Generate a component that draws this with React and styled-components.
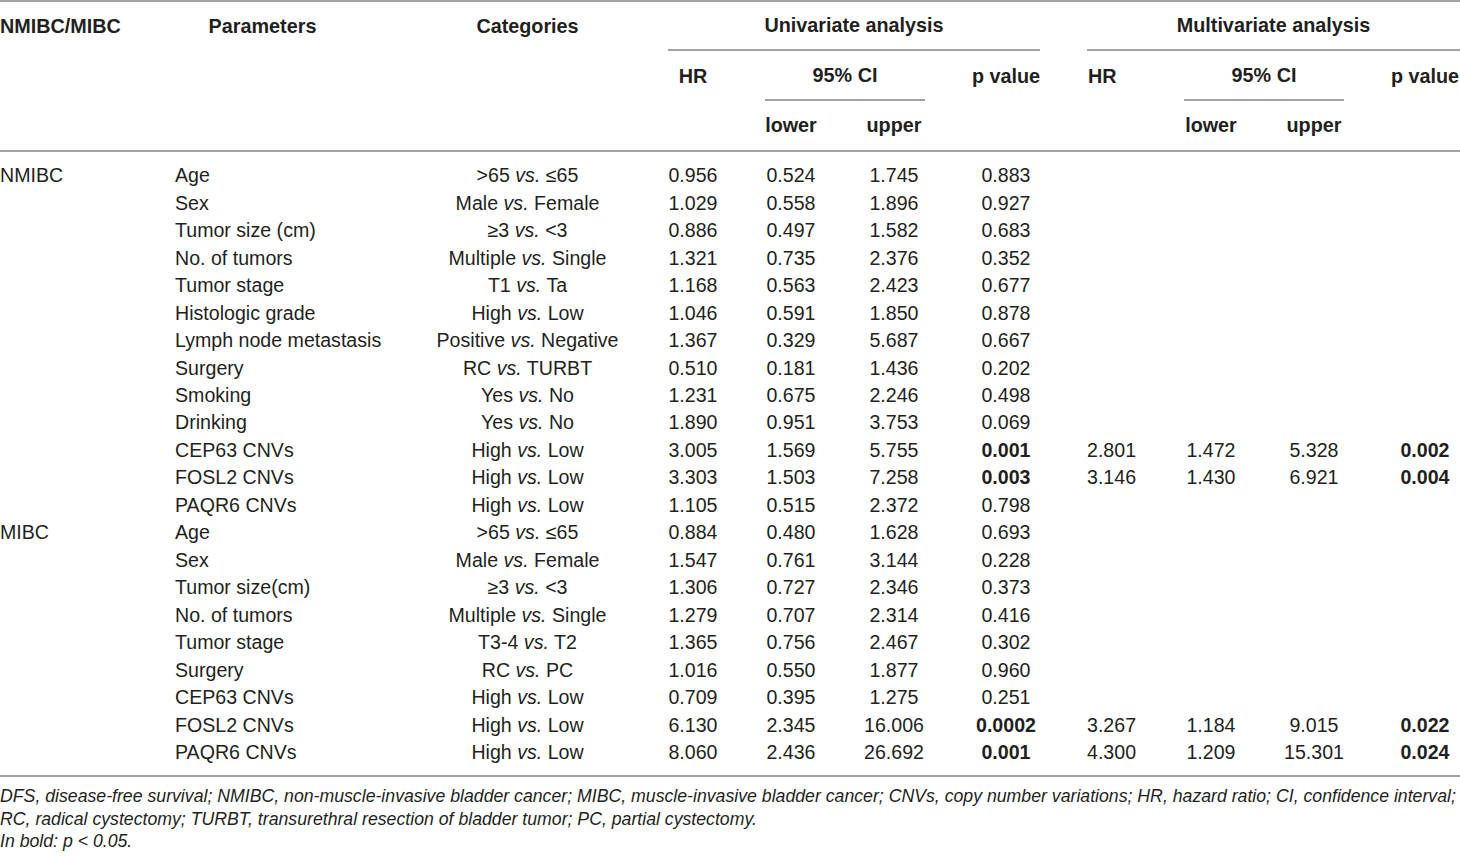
import React from "react";
import styled, { createGlobalStyle, css } from "styled-components";

const Global = createGlobalStyle`
  html, body { margin: 0; padding: 0; background: #ffffff; }
  body {
    font-family: "Liberation Sans", Arial, Helvetica, sans-serif;
    color: #231f20;
  }
`;

const COLS = "175px 255px 195px 136px 60px 146px 78px 115px 102px 104px 94px";
const RULE = "#a3a3a3";

const Page = styled.div`
  width: 1460px;
`;

const Head = styled.div`
  display: grid;
  grid-template-columns: ${COLS};
  grid-template-rows: 49px 50px 49px;
  border-top: 2px solid ${RULE};
  border-bottom: 2px solid ${RULE};
  font-size: 19.8px;
  font-weight: 700;
`;

const HCell = styled.div`
  display: flex;
  align-items: center;
  box-sizing: border-box;
  white-space: nowrap;
  grid-column: ${(p) => p.$col};
  grid-row: ${(p) => p.$row};
  justify-content: ${(p) => p.$align || "center"};
  padding-left: ${(p) => p.$pl || 0}px;
  padding-right: ${(p) => p.$pr || 0}px;
  ${(p) =>
    p.$rule &&
    css`
      border-bottom: 2px solid ${RULE};
      margin-left: ${p.$ml || 0}px;
      margin-right: ${p.$mr || 0}px;
    `}
`;

const Body = styled.div`
  padding: 10px 0 9px;
  border-bottom: 2px solid ${RULE};
  font-size: 19.6px;
`;

const Row = styled.div`
  display: grid;
  grid-template-columns: ${COLS};
  height: 27.48px;
  align-items: center;
  white-space: nowrap;
`;

const Cell = styled.div`
  text-align: ${(p) => p.$align || "center"};
  padding-left: ${(p) => p.$pl || 0}px;
  padding-right: ${(p) => p.$pr || 0}px;
  font-weight: ${(p) => (p.$bold ? 700 : 400)};
`;

const Vs = styled.i`
  font-style: italic;
`;

const Notes = styled.div`
  padding-top: 8px;
  font-size: 17.7px;
  font-style: italic;
  line-height: 22.5px;
  white-space: nowrap;
`;

const Note = styled.div``;

const nmibc = [
  ["Age", [">65", "≤65"], "0.956", "0.524", "1.745", "0.883"],
  ["Sex", ["Male", "Female"], "1.029", "0.558", "1.896", "0.927"],
  ["Tumor size (cm)", ["≥3", "<3"], "0.886", "0.497", "1.582", "0.683"],
  ["No. of tumors", ["Multiple", "Single"], "1.321", "0.735", "2.376", "0.352"],
  ["Tumor stage", ["T1", "Ta"], "1.168", "0.563", "2.423", "0.677"],
  ["Histologic grade", ["High", "Low"], "1.046", "0.591", "1.850", "0.878"],
  ["Lymph node metastasis", ["Positive", "Negative"], "1.367", "0.329", "5.687", "0.667"],
  ["Surgery", ["RC", "TURBT"], "0.510", "0.181", "1.436", "0.202"],
  ["Smoking", ["Yes", "No"], "1.231", "0.675", "2.246", "0.498"],
  ["Drinking", ["Yes", "No"], "1.890", "0.951", "3.753", "0.069"],
  ["CEP63 CNVs", ["High", "Low"], "3.005", "1.569", "5.755", "0.001", ["2.801", "1.472", "5.328", "0.002"]],
  ["FOSL2 CNVs", ["High", "Low"], "3.303", "1.503", "7.258", "0.003", ["3.146", "1.430", "6.921", "0.004"]],
  ["PAQR6 CNVs", ["High", "Low"], "1.105", "0.515", "2.372", "0.798"],
];

const mibc = [
  ["Age", [">65", "≤65"], "0.884", "0.480", "1.628", "0.693"],
  ["Sex", ["Male", "Female"], "1.547", "0.761", "3.144", "0.228"],
  ["Tumor size(cm)", ["≥3", "<3"], "1.306", "0.727", "2.346", "0.373"],
  ["No. of tumors", ["Multiple", "Single"], "1.279", "0.707", "2.314", "0.416"],
  ["Tumor stage", ["T3-4", "T2"], "1.365", "0.756", "2.467", "0.302"],
  ["Surgery", ["RC", "PC"], "1.016", "0.550", "1.877", "0.960"],
  ["CEP63 CNVs", ["High", "Low"], "0.709", "0.395", "1.275", "0.251"],
  ["FOSL2 CNVs", ["High", "Low"], "6.130", "2.345", "16.006", "0.0002", ["3.267", "1.184", "9.015", "0.022"]],
  ["PAQR6 CNVs", ["High", "Low"], "8.060", "2.436", "26.692", "0.001", ["4.300", "1.209", "15.301", "0.024"]],
];

function DataRow({ group, r }) {
  const [param, [a, b], hr, lo, up, p, multi] = r;
  return (
    <Row>
      <Cell $align="left">{group}</Cell>
      <Cell $align="left">{param}</Cell>
      <Cell>
        {a} <Vs>vs.</Vs> {b}
      </Cell>
      <Cell>{hr}</Cell>
      <Cell>{lo}</Cell>
      <Cell>{up}</Cell>
      <Cell $bold={!!multi}>{p}</Cell>
      <Cell $align="left" $pl={42}>{multi ? multi[0] : ""}</Cell>
      <Cell>{multi ? multi[1] : ""}</Cell>
      <Cell>{multi ? multi[2] : ""}</Cell>
      <Cell $pl={24} $bold>{multi ? multi[3] : ""}</Cell>
    </Row>
  );
}

export default function App() {
  return (
    <Page>
      <Global />
      <Head>
        <HCell $col="1" $row="1" $align="flex-start">NMIBC/MIBC</HCell>
        <HCell $col="2" $row="1" $pr={80}>Parameters</HCell>
        <HCell $col="3" $row="1">Categories</HCell>
        <HCell $col="4 / 8" $row="1" $rule $ml={43} $mr={5}>Univariate analysis</HCell>
        <HCell $col="8 / 12" $row="1" $rule $ml={42}>Multivariate analysis</HCell>

        <HCell $col="4" $row="2">HR</HCell>
        <HCell $col="5 / 7" $row="2" $rule $ml={4} $mr={42}>95% CI</HCell>
        <HCell $col="7" $row="2">p value</HCell>
        <HCell $col="8" $row="2" $align="flex-start" $pl={43}>HR</HCell>
        <HCell $col="9 / 11" $row="2" $rule $ml={24} $mr={22}>95% CI</HCell>
        <HCell $col="11" $row="2" $pl={24}>p value</HCell>

        <HCell $col="5" $row="3">lower</HCell>
        <HCell $col="6" $row="3">upper</HCell>
        <HCell $col="9" $row="3">lower</HCell>
        <HCell $col="10" $row="3">upper</HCell>
      </Head>
      <Body>
        {nmibc.map((r, i) => (
          <DataRow key={"n" + i} group={i === 0 ? "NMIBC" : ""} r={r} />
        ))}
        {mibc.map((r, i) => (
          <DataRow key={"m" + i} group={i === 0 ? "MIBC" : ""} r={r} />
        ))}
      </Body>
      <Notes>
        <Note>
          DFS, disease-free survival; NMIBC, non-muscle-invasive bladder cancer; MIBC, muscle-invasive bladder cancer; CNVs, copy number variations; HR, hazard ratio; CI, confidence interval;
        </Note>
        <Note>RC, radical cystectomy; TURBT, transurethral resection of bladder tumor; PC, partial cystectomy.</Note>
        <Note>In bold: p &lt; 0.05.</Note>
      </Notes>
    </Page>
  );
}
